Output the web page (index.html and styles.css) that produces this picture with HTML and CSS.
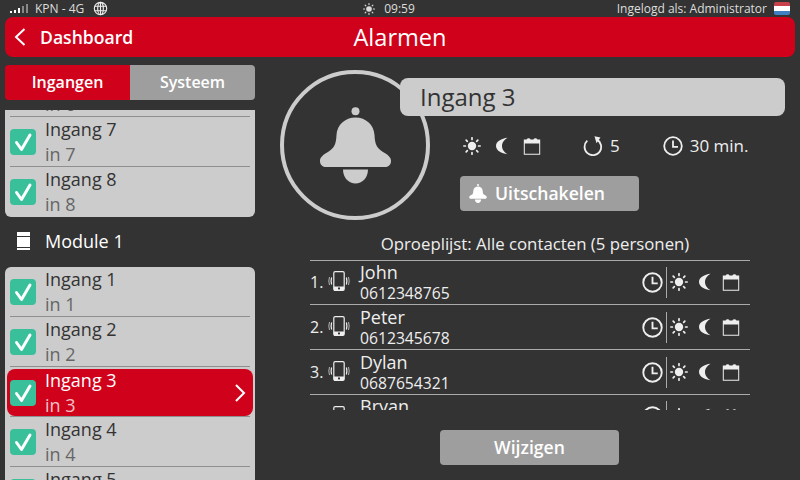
FILE: index.html
```html
<!DOCTYPE html>
<html lang="nl">
	<head>
		<meta charset="utf-8">
		<title>Alarmen</title>
		<link rel="stylesheet" href="styles.css">
	</head>
	<body>
		<!-- icons svg -->
		<svg class="icon-defs" xmlns="http://www.w3.org/2000/svg">
			<symbol id="icon-sun" viewBox="0 0 18 18">
				<circle cx="9" cy="9" r="4.200" fill="currentColor"/>
				<g stroke="currentColor" stroke-width="1.700" stroke-linecap="round">
					<path d="M9 .8v1.600M9 15.600v1.600M.8 9h1.600M15.600 9h1.600M3.200 3.200l1.100 1.100M13.700 13.700l1.100 1.100M3.200 14.800l1.100-1.100M13.700 4.300l1.100-1.100"/>
				</g>
			</symbol>
			<symbol id="icon-moon" viewBox="0 0 18 18">
				<path fill="currentColor" d="M14.500 .8C8.500 1.400 3 4.500 3 9s5.500 7.600 11.500 8.200C11.500 15.500 9 12.500 9 9s2.500-6.500 5.500-8.200z"/>
			</symbol>
			<symbol id="icon-calendar" viewBox="0 0 18 18">
				<path fill="currentColor" d="M.8 2.500h2.800a2.200 2.200 0 0 1 4 0h2.800a2.200 2.200 0 0 1 4 0h2.800v15.300H.8zM1.800 6.500v10.300h14.400V6.500z"/>
			</symbol>
			<symbol id="icon-clock" viewBox="0 0 20 20">
				<circle cx="10" cy="10" r="8.800" fill="none" stroke="currentColor" stroke-width="1.800"/>
				<path d="M10 4.500V10.800H15" fill="none" stroke="currentColor" stroke-width="1.800"/>
			</symbol>
			<symbol id="icon-replay" viewBox="0 0 20 20">
				<path d="M4.300 4.700A8.300 8.300 0 1 0 13.500 3.400" fill="none" stroke="currentColor" stroke-width="1.800"/>
				<path fill="currentColor" d="M11.500 .3l6 1.200-4 5.700z"/>
			</symbol>
			<symbol id="icon-phone" viewBox="0 0 24 20">
				<rect x="6.800" y=".6" width="10.400" height="18.800" rx="1.400" fill="none" stroke="currentColor" stroke-width="1.200"/>
				<path fill="currentColor" fill-rule="evenodd" d="M6.800 15.500h10.400V18a1.400 1.400 0 0 1-1.400 1.400H8.200A1.400 1.400 0 0 1 6.800 18zM11 16.500v2h2v-2z"/>
				<g fill="none" stroke="currentColor">
					<path stroke-width="1.200" d="M4.600 6.500q-1 3.500 0 7M19.400 6.500q1 3.500 0 7"/>
					<path stroke-width=".7" d="M2.500 6q-1.400 4 0 8M21.500 6q1.400 4 0 8"/>
				</g>
			</symbol>
			<symbol id="icon-bell" viewBox="0 0 71 77">
				<circle cx="35.500" cy="4.200" r="4" fill="currentColor"/>
				<path fill="currentColor" d="M35.500 10.500C25 10.500 17 18 16.500 28 16 38 14 41 8 45 3 48 0 50 0 54c0 4 3 6 6 6h59c3 0 6-2 6-6 0-4-3-6-8-9-6-4-8-7-8.500-17C54 18 46 10.500 35.500 10.500z"/>
				<path fill="currentColor" d="M23 62.500h25c0 8.500-6 14-12.500 14S23 71 23 62.500z"/>
			</symbol>
			<symbol id="icon-check" viewBox="0 0 26 26">
				<rect width="26" height="26" rx="4" fill="#3abf9b"/>
				<path d="M6.500 13.500l5 7L20 6" fill="none" stroke="#fff" stroke-width="3" stroke-linecap="round" stroke-linejoin="round"/>
			</symbol>
		</svg>
		<!-- .icons svg -->

		<!-- status bar -->
		<div class="status-bar">
			<div class="status-left">
				<span class="signal"><i class="on"></i><i class="on"></i><i class="on"></i><i></i><i></i></span>
				<span>KPN - 4G</span>
				<svg class="globe" viewBox="0 0 16 16" fill="none" stroke="currentColor" stroke-width="1.200">
					<circle cx="8" cy="8" r="6.600"/>
					<ellipse cx="8" cy="8" rx="3" ry="6.600"/>
					<path d="M8 1.400v13.200M1.800 5.600h12.400M1.800 10.400h12.400"/>
				</svg>
			</div>
			<div class="status-mid">
				<svg class="icon icon-status"><use href="#icon-sun"></use></svg>
				<span>09:59</span>
			</div>
			<div class="status-right">
				<span>Ingelogd als: Administrator</span>
				<span class="flag"></span>
			</div>
		</div>

		<!-- header -->
		<div class="header">
			<div class="back">
				<svg class="back-arrow" viewBox="0 0 12 18"><path d="M10.500 1L2 9l8.500 8" fill="none" stroke="currentColor" stroke-width="2"/></svg>
				<span>Dashboard</span>
			</div>
			<div class="header-title">Alarmen</div>
		</div>

		<div class="main">
			<!-- sidebar -->
			<div class="sidebar">
				<div class="tabs">
					<div class="tab active">Ingangen</div>
					<div class="tab">Systeem</div>
				</div>
				<div class="input-scroll">
					<div class="input-scroll-inner">
						<div class="input-card">
							<div class="input-item">
								<svg class="check"><use href="#icon-check"></use></svg>
								<div class="input-text"><div class="input-name">Ingang 6</div><div class="input-sub">in 6</div></div>
							</div>
							<div class="input-item">
								<svg class="check"><use href="#icon-check"></use></svg>
								<div class="input-text"><div class="input-name">Ingang 7</div><div class="input-sub">in 7</div></div>
							</div>
							<div class="input-item">
								<svg class="check"><use href="#icon-check"></use></svg>
								<div class="input-text"><div class="input-name">Ingang 8</div><div class="input-sub">in 8</div></div>
							</div>
						</div>
						<div class="module-row">
							<span class="module-icon"></span>
							<span>Module 1</span>
						</div>
						<div class="input-card">
							<div class="input-item">
								<svg class="check"><use href="#icon-check"></use></svg>
								<div class="input-text"><div class="input-name">Ingang 1</div><div class="input-sub">in 1</div></div>
							</div>
							<div class="input-item">
								<svg class="check"><use href="#icon-check"></use></svg>
								<div class="input-text"><div class="input-name">Ingang 2</div><div class="input-sub">in 2</div></div>
							</div>
							<div class="input-item selected">
								<svg class="check"><use href="#icon-check"></use></svg>
								<div class="input-text"><div class="input-name">Ingang 3</div><div class="input-sub">in 3</div></div>
								<svg class="item-arrow" viewBox="0 0 12 18"><path d="M2 1l8 8-8 8" fill="none" stroke="currentColor" stroke-width="2"/></svg>
							</div>
							<div class="input-item">
								<svg class="check"><use href="#icon-check"></use></svg>
								<div class="input-text"><div class="input-name">Ingang 4</div><div class="input-sub">in 4</div></div>
							</div>
							<div class="input-item">
								<svg class="check"><use href="#icon-check"></use></svg>
								<div class="input-text"><div class="input-name">Ingang 5</div><div class="input-sub">in 5</div></div>
							</div>
						</div>
					</div>
				</div>
			</div>

			<!-- detail -->
			<div class="detail">
				<div class="detail-top">
					<div class="bell-circle">
						<svg class="bell-icon"><use href="#icon-bell"></use></svg>
					</div>
					<div class="detail-info">
						<div class="detail-title">Ingang 3</div>
						<div class="detail-icons">
							<div class="icon-group">
								<svg class="icon"><use href="#icon-sun"></use></svg>
								<svg class="icon"><use href="#icon-moon"></use></svg>
								<svg class="icon"><use href="#icon-calendar"></use></svg>
							</div>
							<div class="icon-value icon-value-retry">
								<svg class="icon icon-big"><use href="#icon-replay"></use></svg>
								<span>5</span>
							</div>
							<div class="icon-value">
								<svg class="icon icon-big"><use href="#icon-clock"></use></svg>
								<span>30 min.</span>
							</div>
						</div>
						<div class="btn btn-disable">
							<svg class="btn-bell"><use href="#icon-bell"></use></svg>
							<span>Uitschakelen</span>
						</div>
					</div>
				</div>

				<div class="call-title">Oproeplijst: Alle contacten (5 personen)</div>
				<div class="call-list">
					<div class="call-row">
						<span class="call-nr">1.</span>
						<svg class="phone"><use href="#icon-phone"></use></svg>
						<div class="call-text"><div class="call-name">John</div><div class="call-number">0612348765</div></div>
						<svg class="icon icon-big"><use href="#icon-clock"></use></svg>
						<span class="call-sep"></span>
						<div class="icon-group">
							<svg class="icon"><use href="#icon-sun"></use></svg>
							<svg class="icon"><use href="#icon-moon"></use></svg>
							<svg class="icon"><use href="#icon-calendar"></use></svg>
						</div>
					</div>
					<div class="call-row">
						<span class="call-nr">2.</span>
						<svg class="phone"><use href="#icon-phone"></use></svg>
						<div class="call-text"><div class="call-name">Peter</div><div class="call-number">0612345678</div></div>
						<svg class="icon icon-big"><use href="#icon-clock"></use></svg>
						<span class="call-sep"></span>
						<div class="icon-group">
							<svg class="icon"><use href="#icon-sun"></use></svg>
							<svg class="icon"><use href="#icon-moon"></use></svg>
							<svg class="icon"><use href="#icon-calendar"></use></svg>
						</div>
					</div>
					<div class="call-row">
						<span class="call-nr">3.</span>
						<svg class="phone"><use href="#icon-phone"></use></svg>
						<div class="call-text"><div class="call-name">Dylan</div><div class="call-number">0687654321</div></div>
						<svg class="icon icon-big"><use href="#icon-clock"></use></svg>
						<span class="call-sep"></span>
						<div class="icon-group">
							<svg class="icon"><use href="#icon-sun"></use></svg>
							<svg class="icon"><use href="#icon-moon"></use></svg>
							<svg class="icon"><use href="#icon-calendar"></use></svg>
						</div>
					</div>
					<div class="call-row">
						<span class="call-nr">4.</span>
						<svg class="phone"><use href="#icon-phone"></use></svg>
						<div class="call-text"><div class="call-name">Bryan</div><div class="call-number">0612121212</div></div>
						<svg class="icon icon-big"><use href="#icon-clock"></use></svg>
						<span class="call-sep"></span>
						<div class="icon-group">
							<svg class="icon"><use href="#icon-sun"></use></svg>
							<svg class="icon"><use href="#icon-moon"></use></svg>
							<svg class="icon"><use href="#icon-calendar"></use></svg>
						</div>
					</div>
				</div>
				<div class="detail-footer">
					<div class="btn btn-change">Wijzigen</div>
				</div>
			</div>
		</div>
	</body>
</html>
```

FILE: styles.css
```css
* {
  box-sizing: border-box;
}
html, body {
  margin: 0;
  height: 480px;
  overflow: hidden;
}
body {
  background-color: #333;
  color: #fff;
  font-family: "Open Sans", "Liberation Sans", sans-serif;
  width: 800px;
}
.icon-defs {
  display: none;
}

/* status bar */
.status-bar {
  height: 17px;
  display: grid;
  grid-template-columns: 1fr auto 1fr;
  align-items: center;
  font-size: 12px;
  color: #ddd;
  padding: 0 10px;
}
.status-left {
  display: flex;
  align-items: center;
}
.signal {
  display: flex;
  align-items: flex-end;
  gap: 2px;
  height: 9px;
  margin-right: 7px;
}
.signal i {
  display: block;
  width: 2px;
  background-color: #888;
}
.signal i.on {
  background-color: #fff;
}
.signal i:nth-child(1) { height: 2px; }
.signal i:nth-child(2) { height: 3px; }
.signal i:nth-child(3) { height: 5px; }
.signal i:nth-child(4) { height: 7px; }
.signal i:nth-child(5) { height: 9px; }
.globe {
  width: 15px;
  height: 15px;
  margin-left: 9px;
  color: #eee;
}
.status-mid {
  display: flex;
  align-items: center;
  gap: 9px;
  margin-right: 22px;
}
.status-mid .icon-status {
  width: 12px;
  height: 12px;
}
.status-right {
  display: flex;
  align-items: center;
  justify-content: flex-end;
  gap: 7px;
}
.flag {
  width: 16px;
  height: 13px;
  border-radius: 2px;
  background: linear-gradient(#c8414b 0 33%, #fff 33% 66%, #3f7fc4 66%);
}

/* header */
.header {
  margin: 0 5px;
  height: 40px;
  border-radius: 8px;
  background-color: #d0021b;
  display: grid;
  grid-template-columns: 1fr auto 1fr;
  align-items: center;
}
.back {
  display: flex;
  align-items: center;
  font-size: 17.600px;
  font-weight: 600;
  padding: 0 0 1px 9px;
}
.back-arrow {
  width: 12px;
  height: 18px;
  margin-right: 14px;
}
.header-title {
  font-size: 23.600px;
  line-height: 40px;
}

/* layout */
.main {
  display: flex;
  height: 423px;
}
.sidebar {
  width: 250px;
  flex-shrink: 0;
  margin-left: 5px;
  padding-top: 8px;
  display: flex;
  flex-direction: column;
}
.tabs {
  display: flex;
  height: 35px;
  border-radius: 4px;
  overflow: hidden;
  flex-shrink: 0;
}
.tab {
  width: 50%;
  background-color: #9e9e9e;
  font-size: 16px;
  font-weight: 600;
  line-height: 35px;
  text-align: center;
}
.tab.active {
  background-color: #d0021b;
}

/* input list */
.input-scroll {
  margin-top: 10px;
  flex: 1;
  overflow: hidden;
}
.input-scroll-inner {
  margin-top: -43px;
}
.input-card {
  background-color: #ccc;
  border-radius: 6px;
}
.input-item {
  height: 50px;
  display: flex;
  align-items: center;
  padding: 0 5px;
  position: relative;
  color: #333;
}
.input-item::before {
  content: "";
  position: absolute;
  top: -1px;
  left: 5px;
  right: 5px;
  height: 1px;
  background-color: #8f8f8f;
}
.input-item:first-child::before {
  display: none;
}
.check {
  width: 26px;
  height: 26px;
  flex-shrink: 0;
}
.input-text {
  margin-left: 9px;
  flex: 1;
  font-size: 18px;
  line-height: 25px;
}
.input-sub {
  color: #666;
}
.input-item.selected {
  background-color: #d0021b;
  border-radius: 8px;
  margin: 2px 2px 1px;
  height: 47px;
  padding: 0 3px;
  color: #fff;
}
.input-item.selected::before {
  top: -3px;
  left: 3px;
  right: 3px;
}
.input-item.selected .input-sub {
  color: #f2c2c8;
}
.item-arrow {
  width: 12px;
  height: 18px;
  margin-right: 4px;
}
.module-row {
  height: 50px;
  display: flex;
  align-items: center;
  font-size: 18px;
  padding-bottom: 2px;
}
.module-icon {
  width: 13px;
  height: 18px;
  margin: 0 15px 0 12px;
  background-color: #fff;
  border-top: 2px solid #fff;
  box-shadow: inset 0 -2px 0 #fff, inset 0 -3px 0 #333, inset 0 2px 0 #fff, inset 0 3px 0 #333;
}

/* detail */
.detail {
  width: 545px;
  flex-shrink: 0;
  padding-top: 13px;
  display: flex;
  flex-direction: column;
}
.detail-top {
  display: flex;
  height: 162px;
  padding-left: 25px;
}
.bell-circle {
  width: 150px;
  height: 150px;
  border: 4px solid #ccc;
  border-radius: 50%;
  display: flex;
  align-items: center;
  justify-content: center;
  flex-shrink: 0;
}
.bell-icon {
  width: 71px;
  height: 77px;
  color: #ccc;
}
.detail-info {
  position: relative;
  margin-left: -30px;
  padding-top: 8px;
  width: 385px;
}
.detail-title {
  height: 38px;
  border-radius: 8px;
  background-color: #ccc;
  color: #333;
  font-size: 24px;
  line-height: 38px;
  padding-left: 20px;
}
.detail-icons {
  display: flex;
  align-items: center;
  margin-top: 18px;
  padding-left: 63px;
  font-size: 17px;
  color: #eee;
}
.icon-group {
  display: flex;
  align-items: center;
  gap: 12px;
}
.icon {
  width: 18px;
  height: 18px;
  display: block;
  flex-shrink: 0;
}
.icon-big {
  width: 20px;
  height: 20px;
}
.icon-value {
  display: flex;
  align-items: center;
  gap: 7px;
}
.icon-value-retry {
  margin: 0 43px 0 42px;
}
.btn {
  background-color: #9e9e9e;
  border-radius: 4px;
  height: 35px;
  width: 179px;
  font-size: 17.600px;
  font-weight: 600;
  line-height: 35px;
  text-align: center;
}
.btn-disable {
  display: flex;
  align-items: center;
  gap: 8px;
  margin: 19px 0 0 60px;
  padding-left: 9px;
  text-align: left;
}
.btn-bell {
  width: 18px;
  height: 19px;
  color: #fff;
}

/* call list */
.call-title {
  margin-top: 1px;
  padding-left: 15px;
  font-size: 16.800px;
  line-height: 22px;
  text-align: center;
  color: #eee;
}
.call-list {
  margin: 4.600px 0 0 55px;
  width: 440px;
  height: 150.400px;
  overflow: hidden;
}
.call-row {
  height: 44.800px;
  border-top: 1px solid #aaa;
  display: flex;
  align-items: center;
  color: #eee;
}
.call-nr {
  font-size: 16px;
  width: 17px;
}
.phone {
  width: 24px;
  height: 20px;
  margin: 0 9px 2px 0;
}
.call-text {
  flex: 1;
}
.call-name {
  font-size: 18px;
  line-height: 22px;
}
.call-number {
  font-size: 15.700px;
  line-height: 21px;
}
.call-row .icon-big {
  width: 21px;
  height: 21px;
}
.call-sep {
  width: 1px;
  height: 31px;
  background-color: #aaa;
  margin: 0 3px;
}
.call-row .icon-group {
  gap: 8px;
  padding-right: 10px;
}
.detail-footer {
  margin-top: 20px;
  padding-left: 185px;
}
```
